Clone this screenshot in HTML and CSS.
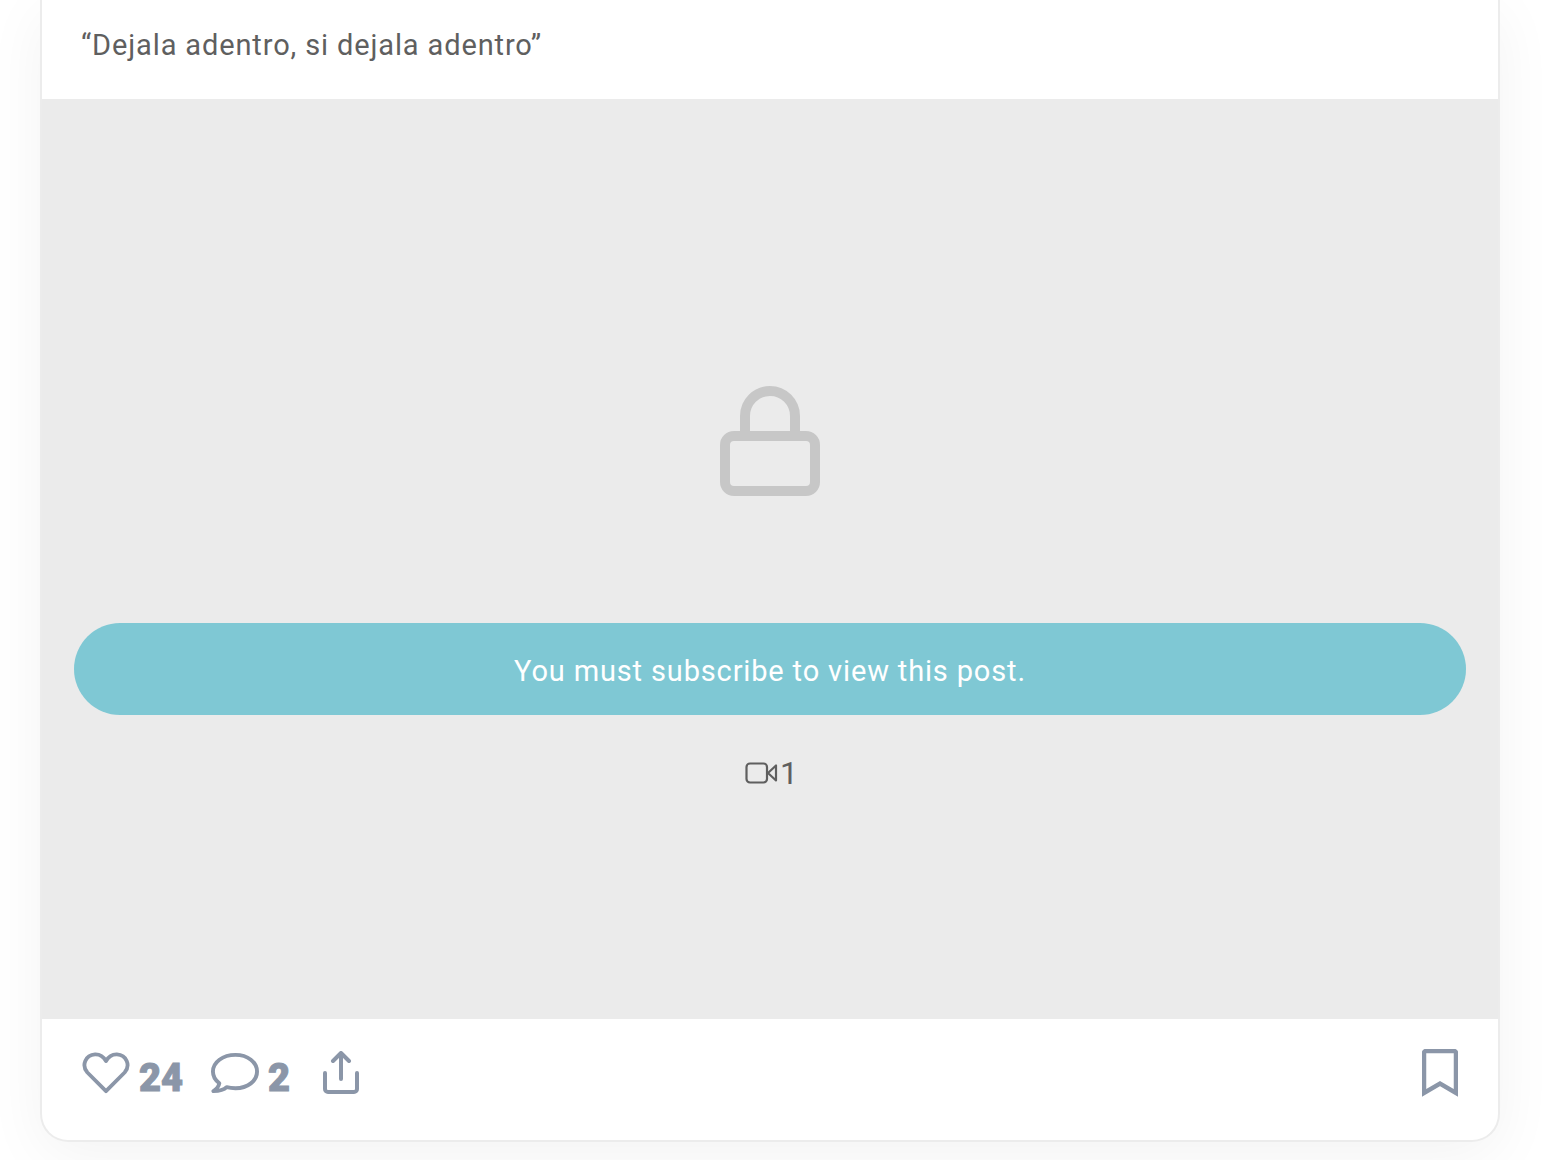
FILE: index.html
```html
<!DOCTYPE html>
<html lang="es">
<head>
    <meta charset="utf-8">
    <title>Post</title>
    <link rel="stylesheet" href="styles.css">
</head>
<body>
<div class="post">
    <p class="post-caption">“Dejala adentro, si dejala adentro”</p>
    <div class="locked">
        <svg class="lock-icon" width="100" height="110" viewBox="0 0 100 110" fill="none" stroke="#c7c7c7" stroke-width="10">
            <rect x="5" y="50" width="90" height="55" rx="9"/>
            <path d="M25 50V30a25 25 0 0 1 50 0V50"/>
        </svg>
        <a class="subscribe-btn">You must subscribe to view this post.</a>
        <div class="media-count">
            <svg width="33" height="22" viewBox="0 0 33 22" fill="none" stroke="#5f5f5f" stroke-width="2.2" stroke-linejoin="round">
                <rect x="1.500" y="1.500" width="20.500" height="19" rx="3.500"/>
                <path d="M31 3.500V18.500L23 11z"/>
            </svg>
            <span>1</span>
        </div>
    </div>
    <div class="post-actions">
        <div class="action">
            <svg width="48" height="42" viewBox="0 0 50 44" fill="none" stroke="#8b96a8" stroke-width="4" stroke-linejoin="round">
                <path d="M25 41L5.500 21.500C-1 14 3.500 3 13.500 2.500 18.500 2.300 22.500 5 25 9.500 27.500 5 31.500 2.300 36.500 2.500 46.500 3 51 14 44.500 21.500z"/>
            </svg>
            <span>24</span>
        </div>
        <div class="action">
            <svg width="49" height="42" viewBox="0 0 50 42" fill="none" stroke="#8b96a8" stroke-width="4" stroke-linejoin="round">
                <path d="M26 2.500C13 2.500 3 10 3 19.500 3 24 5.500 28.500 9.500 31.500 9 34.500 6.500 37.500 3.500 39.500 9 39.500 14 38.500 17 35.500 19.800 36.200 22.800 36.500 26 36.500 38.500 36.500 48 29 48 19.500S38.500 2.500 26 2.500z"/>
            </svg>
            <span>2</span>
        </div>
        <svg class="share-icon" width="36" height="43" viewBox="0 0 36 43" fill="none" stroke="#8b96a8" stroke-width="4" stroke-linecap="round" stroke-linejoin="round">
            <path d="M18 28V2.500M10 10l8-8 8 8"/>
            <path d="M2 22v16a3 3 0 0 0 3 3h26a3 3 0 0 0 3-3V22"/>
        </svg>
        <svg class="bookmark-icon" width="36" height="48" viewBox="0 0 36 48" fill="none" stroke="#8b96a8" stroke-width="4.500">
            <path d="M2 44V4a2 2 0 0 1 2-2h28a2 2 0 0 1 2 2v40L18 34.500z"/>
        </svg>
    </div>
</div>
</body>
</html>
```

FILE: styles.css
```css
html, body {
    margin: 0;
    padding: 0;
}

body {
    height: 1160px;
    overflow: hidden;
    background: #fff;
    font-family: Roboto, "Liberation Sans", sans-serif;
    color: #5f5f5f;
}

.post {
    width: 1460px;
    height: 1142px;
    margin-left: 40px;
    box-sizing: border-box;
    background: #fff;
    border: 2px solid #ececec;
    border-top: 0;
    border-radius: 0 0 28px 28px;
    box-shadow: 0 14px 60px rgba(0, 0, 0, 0.05);
}

.post-caption {
    height: 99px;
    margin: 0;
    padding: 27px 0 0 39px;
    box-sizing: border-box;
    font-size: 29px;
    line-height: 36px;
    letter-spacing: 0.87px;
}

.locked {
    height: 920px;
    display: flex;
    flex-direction: column;
    align-items: center;
    box-sizing: border-box;
    padding-top: 287px;
    background: #ebebeb;
}

.subscribe-btn {
    width: 1392px;
    height: 92px;
    margin-top: 127px;
    border-radius: 46px;
    background: #7fc8d4;
    color: #fff;
    font-size: 29px;
    line-height: 96px;
    text-align: center;
    letter-spacing: 0.85px;
}

.media-count {
    display: flex;
    align-items: center;
    gap: 2px;
    margin-top: 40px;
    padding-left: 3px;
    font-size: 32px;
    line-height: 36px;
}

.post-actions {
    display: flex;
    align-items: flex-start;
    padding: 30px 40px 0 40px;
    color: #8b96a8;
}

.action {
    display: flex;
    align-items: center;
    gap: 9px;
    height: 48px;
    margin-right: 27px;
    font-size: 38px;
    font-weight: 900;
    -webkit-text-stroke: 1px #8b96a8;
}

.action span {
    padding-top: 9px;
    line-height: 40px;
}

.share-icon {
    margin: 2px 0 0 6px;
}

.bookmark-icon {
    margin-left: auto;
}
```
